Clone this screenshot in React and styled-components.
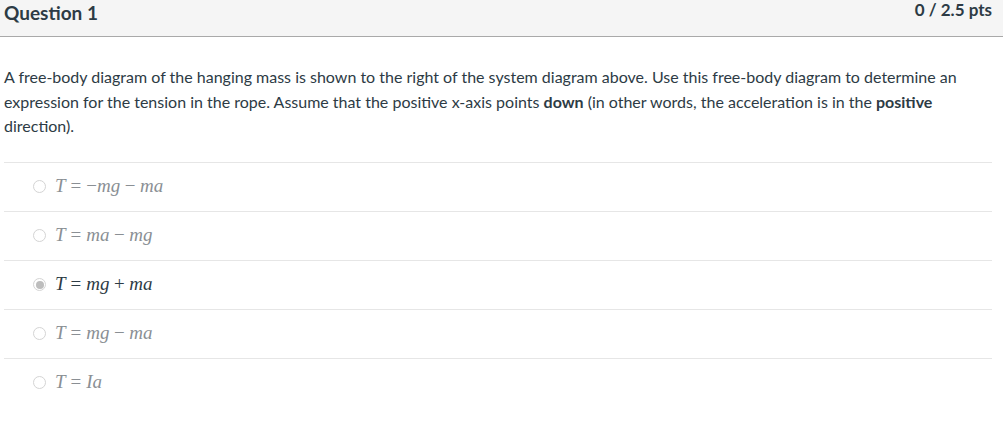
import React from "react";
import styled, { createGlobalStyle } from "styled-components";

const Global = createGlobalStyle`
  html, body { margin: 0; padding: 0; background: #fff; }
  body { font-family: Lato, "Noto Sans", sans-serif; color: #2d3b45; }
`;

const Card = styled.div`
  width: 1003px;
`;

const Header = styled.div`
  display: flex;
  justify-content: space-between;
  align-items: flex-start;
  height: 37px;
  padding: 0 11px 0 4px;
  background: #f5f5f5;
  border-bottom: 1px solid #a9a9a9;
  box-sizing: border-box;
`;

const Title = styled.h2`
  margin: 0;
  font-size: 19px;
  line-height: 25px;
  font-weight: 700;
  color: #2d3b45;
`;

const Points = styled.div`
  font-size: 17px;
  line-height: 20px;
  font-weight: 700;
  color: #2d3b45;
`;

const Body = styled.div`
  padding: 28px 10px 0 4px;
`;

const Prompt = styled.p`
  margin: 0;
  font-size: 16px;
  line-height: 24.5px;
  color: #2d3b45;
`;

const Answers = styled.div`
  margin-top: 23px;
  width: 988px;
`;

const Row = styled.label`
  display: flex;
  align-items: center;
  height: 49px;
  border-top: 1px solid #e6e6e6;
  padding-left: 29px;
  box-sizing: border-box;
`;

const Radio = styled.span`
  width: 13px;
  height: 13px;
  border-radius: 50%;
  border: 1px solid #d4d4d4;
  box-sizing: border-box;
  background: #fff;
  display: flex;
  align-items: center;
  justify-content: center;
  margin-right: 9px;
  &::after {
    content: "";
    width: 8px;
    height: 8px;
    border-radius: 50%;
    background: ${(p) => (p.checked ? "#bdbdbd" : "transparent")};
  }
`;

const Math = styled.span`
  font-family: "Liberation Serif", "DejaVu Serif", serif;
  font-size: 19px;
  color: ${(p) => (p.checked ? "#2d3b45" : "#8a8f94")};
  padding-bottom: 2px;
  i { font-style: italic; }
`;

const Rel = styled.span`
  margin: 0 5px;
`;

const Bin = styled.span`
  margin: 0 4.5px;
`;

const answers = [
  [<i key="a">T</i>, <Rel key="b">=</Rel>, <span key="c">−<i>mg</i></span>, <Bin key="d">−</Bin>, <i key="e">ma</i>],
  [<i key="a">T</i>, <Rel key="b">=</Rel>, <i key="c">ma</i>, <Bin key="d">−</Bin>, <i key="e">mg</i>],
  [<i key="a">T</i>, <Rel key="b">=</Rel>, <i key="c">mg</i>, <Bin key="d">+</Bin>, <i key="e">ma</i>],
  [<i key="a">T</i>, <Rel key="b">=</Rel>, <i key="c">mg</i>, <Bin key="d">−</Bin>, <i key="e">ma</i>],
  [<i key="a">T</i>, <Rel key="b">=</Rel>, <i key="c">Ia</i>],
];

export default function App() {
  return (
    <Card>
      <Global />
      <Header>
        <Title>Question 1</Title>
        <Points>0 / 2.5 pts</Points>
      </Header>
      <Body>
        <Prompt>
          A free-body diagram of the hanging mass is shown to the right of the system diagram above. Use this free-body diagram to determine an expression for the tension in the rope. Assume that the positive x-axis points <b>down</b> (in other words, the acceleration is in the <b>positive</b> direction).
        </Prompt>
        <Answers>
          {answers.map((a, i) => (
            <Row key={i}>
              <Radio checked={i === 2} />
              <Math checked={i === 2}>{a}</Math>
            </Row>
          ))}
        </Answers>
      </Body>
    </Card>
  );
}
